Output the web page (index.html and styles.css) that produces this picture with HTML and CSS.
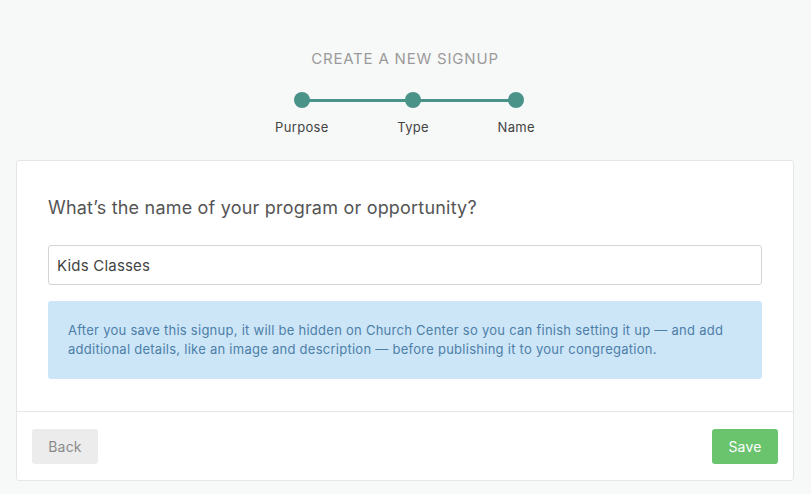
FILE: index.html
```html
<!DOCTYPE html>
<html>
<head>
<meta charset="utf-8">
<link rel="stylesheet" href="styles.css">
</head>
<body>
<div class="page">
  <header class="head">
    <h1 class="title">CREATE A NEW SIGNUP</h1>
    <div class="stepper">
      <span class="track"></span>
      <div class="step"><span class="dot"></span><span class="label">Purpose</span></div>
      <div class="step"><span class="dot"></span><span class="label">Type</span></div>
      <div class="step"><span class="dot"></span><span class="label">Name</span></div>
    </div>
  </header>
  <section class="card">
    <div class="card-body">
      <h2 class="question">What’s the name of your program or opportunity?</h2>
      <input class="field" type="text" value="Kids Classes">
      <div class="notice">After you save this signup, it will be hidden on Church Center so you can finish setting it up — and add additional details, like an image and description — before publishing it to your congregation.</div>
    </div>
    <div class="card-foot">
      <button class="btn btn-back">Back</button>
      <button class="btn btn-save">Save</button>
    </div>
  </section>
</div>
</body>
</html>
```
FILE: styles.css
```css
* { box-sizing: border-box; }
html, body { margin: 0; padding: 0; }
body {
  background: #f7f8f8;
  font-family: Inter, "Noto Sans", "Liberation Sans", sans-serif;
  color: #444;
  width: 811px;
  height: 494px;
  overflow: hidden;
}
.page { padding: 0 17px 0 16px; }
.head {
  display: flex;
  flex-direction: column;
  align-items: center;
  padding-top: 49px;
  height: 160px;
}
.title {
  margin: 0;
  font-size: 15px;
  font-weight: 400;
  letter-spacing: 0.8px;
  color: #9b9b9b;
  line-height: 20px;
}
.stepper {
  position: relative;
  margin-top: 23px;
  width: 260px;
  display: flex;
  justify-content: space-between;
}
.track {
  position: absolute;
  left: 27px;
  right: 19px;
  top: 7px;
  height: 3px;
  background: #4a9389;
}
.step {
  position: relative;
  display: flex;
  flex-direction: column;
  align-items: center;
}
.dot {
  width: 16px;
  height: 16px;
  border-radius: 50%;
  background: #4a9389;
}
.label {
  margin-top: 11px;
  font-size: 13px;
  line-height: 16px;
  letter-spacing: 0.35px;
  color: #444;
}
.card {
  background: #fff;
  border: 1px solid #e6e6e6;
  border-radius: 3px;
  height: 321px;
  display: flex;
  flex-direction: column;
}
.card-body {
  padding: 34px 31px 32px;
  border-bottom: 1px solid #e6e6e6;
}
.question {
  margin: 0;
  font-size: 18px;
  font-weight: 400;
  line-height: 26px;
  letter-spacing: 0.2px;
  color: #555;
}
.field {
  display: block;
  width: 100%;
  height: 40px;
  margin-top: 24px;
  padding: 0 8px;
  border: 1px solid #d5d5d5;
  border-radius: 3px;
  font-family: inherit;
  font-size: 15px;
  letter-spacing: 0.2px;
  color: #444;
  background: #fff;
}
.notice {
  margin-top: 16px;
  background: #cce5f7;
  border-radius: 3px;
  padding: 20px 20px 20px;
  font-size: 13px;
  line-height: 19px;
  letter-spacing: 0.26px;
  color: #4c7fa8;
}
.card-foot {
  flex: 1;
  display: flex;
  justify-content: space-between;
  align-items: center;
  padding: 0 15px;
}
.btn {
  height: 35px;
  width: 66px;
  border: 0;
  border-radius: 3px;
  font-family: inherit;
  font-size: 14px;
  letter-spacing: 0.2px;
}
.btn-back { background: #ececec; color: #8a8a8a; }
.btn-save { background: #6ac46e; color: #fff; }
```
